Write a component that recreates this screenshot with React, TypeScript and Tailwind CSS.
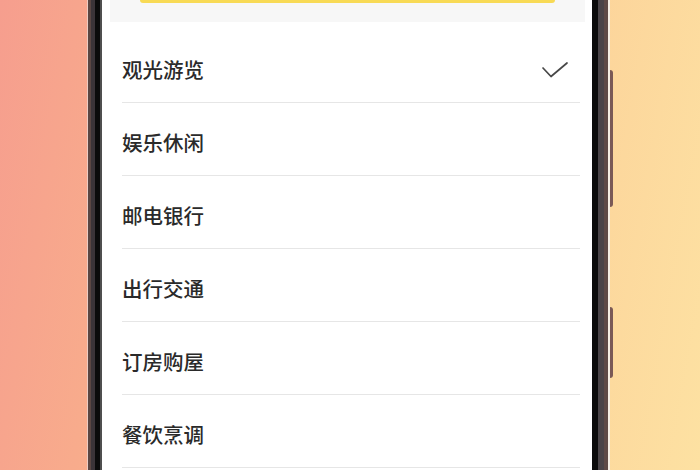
const categories = ["观光游览", "娱乐休闲", "邮电银行", "出行交通", "订房购屋", "餐饮烹调"]

function Check() {
  return (
    <svg width="26" height="16" viewBox="0 0 26 16" fill="none">
      <path d="M1 6 L9 14.5 L25 1" stroke="#474747" strokeWidth="1.7" strokeLinecap="round" strokeLinejoin="round" />
    </svg>
  )
}

export default function App() {
  return (
    <div className="h-[470px] w-[700px] overflow-hidden bg-[linear-gradient(100deg,#f69e8e_0%,#f9b28b_30%,#fcd199_70%,#fde1a2_100%)] font-['Noto_Sans_CJK_SC','Noto_Sans',sans-serif]">
      <div className="relative ml-[87px] h-[470px] w-[523px]">
        {/* side buttons */}
        <div className="absolute left-[523px] top-[70px] h-[137px] w-[3px] rounded-r-sm bg-[#7a5956]" />
        <div className="absolute left-[523px] top-[307px] h-[71px] w-[3px] rounded-r-sm bg-[#7a5956]" />

        <div className="h-full border-l border-r-2 border-l-[#ecccc4] border-r-[#f6efe4]">
          <div className="h-full border-l-[3px] border-r-4 border-l-[#5b4642] border-r-[#5e4a47]">
            <div className="h-full border-l-4 border-r-[6px] border-l-[#3b3438] border-r-[#4a4448]">
              <div className="h-full border-l-[5px] border-r-[6px] border-[#0b0b0b]">
                <div className="h-full border-l-2 border-l-[#4f4f4f] bg-white">
                  <div className="ml-[8px] mr-[7px] h-[22px] bg-[#f7f7f7] px-[30px]">
                    <div className="h-[3px] rounded-b-full bg-[#f8da55]" />
                  </div>
                  <ul className="mt-[8px] pl-[20px] pr-[12px]">
                    {categories.map((name, i) => (
                      <li key={name} className="flex h-[73px] items-center border-b border-[#e6e6e6] pt-[7px]">
                        <span className="text-[20.5px] font-medium leading-none text-[#2a2a2a]">{name}</span>
                        {i === 0 && (
                          <span className="ml-auto mr-[12px] flex">
                            <Check />
                          </span>
                        )}
                      </li>
                    ))}
                  </ul>
                </div>
              </div>
            </div>
          </div>
        </div>
      </div>
    </div>
  )
}
